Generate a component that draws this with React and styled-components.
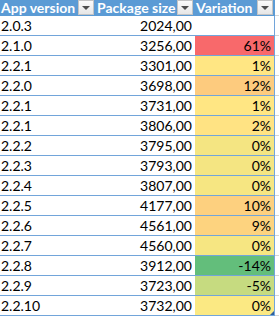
import React from 'react';
import styled, { createGlobalStyle } from 'styled-components';

const GlobalStyle = createGlobalStyle`
  html, body {
    margin: 0;
    padding: 0;
    background: #ffffff;
  }
  body {
    font-family: 'Lato', 'Liberation Sans', sans-serif;
    color: #000000;
  }
`;

const rows = [
  { version: '2.0.3', size: '2024,00', variation: null, fill: null },
  { version: '2.1.0', size: '3256,00', variation: '61%', fill: '#F8696B' },
  { version: '2.2.1', size: '3301,00', variation: '1%', fill: '#FFE683' },
  { version: '2.2.0', size: '3698,00', variation: '12%', fill: '#FDCB7E' },
  { version: '2.2.1', size: '3731,00', variation: '1%', fill: '#FFE683' },
  { version: '2.2.1', size: '3806,00', variation: '2%', fill: '#FFE383' },
  { version: '2.2.2', size: '3795,00', variation: '0%', fill: '#F4E582' },
  { version: '2.2.3', size: '3793,00', variation: '0%', fill: '#F4E582' },
  { version: '2.2.4', size: '3807,00', variation: '0%', fill: '#F6E682' },
  { version: '2.2.5', size: '4177,00', variation: '10%', fill: '#FDD07F' },
  { version: '2.2.6', size: '4561,00', variation: '9%', fill: '#FDD37F' },
  { version: '2.2.7', size: '4560,00', variation: '0%', fill: '#F6E682' },
  { version: '2.2.8', size: '3912,00', variation: '-14%', fill: '#63BE7B' },
  { version: '2.2.9', size: '3723,00', variation: '-5%', fill: '#C6DB80' },
  { version: '2.2.10', size: '3732,00', variation: '0%', fill: '#FBE983' },
];

const columns = ['App version', 'Package size', 'Variation'];

const Sheet = styled.div`
  width: 279px;
  height: 318px;
  overflow: hidden;
  font-size: 14px;
`;

const Row = styled.div`
  display: grid;
  grid-template-columns: 96px 99px 80px 1fr;
  height: ${p => (p.$header ? '16px' : '20px')};
`;

const HeadCell = styled.div`
  display: flex;
  justify-content: space-between;
  align-items: flex-start;
  background: #5B9BD5;
  color: #ffffff;
  font-weight: bold;
  padding-left: ${p => (p.$first ? '1px' : '1px')};
  overflow: hidden;
`;

const HeadLabel = styled.span`
  line-height: 16px;
  white-space: nowrap;
`;

const FilterButton = styled.span`
  flex: none;
  width: 16px;
  height: 15px;
  box-sizing: border-box;
  margin-right: 2px;
  border: 1px solid #c4c4c4;
  background: linear-gradient(#fbfbfb, #e6e6e6);
  display: flex;
  align-items: center;
  justify-content: center;

  &::after {
    content: '';
    border-left: 4px solid transparent;
    border-right: 4px solid transparent;
    border-top: 4px solid #4d4d4d;
    margin-top: 1px;
  }
`;

const Cell = styled.div`
  position: relative;
  display: flex;
  align-items: center;
  justify-content: ${p => (p.$align === 'right' ? 'flex-end' : 'flex-start')};
  padding: ${p => (p.$align === 'right' ? '0 3px 0 0' : '0 0 0 1px')};
  background: ${p => p.$fill || '#ffffff'};
  border-bottom: 1px solid #72A5DA;
  border-right: ${p => (p.$last ? '1px solid #72A5DA' : '0')};
  white-space: nowrap;
  line-height: 19px;
`;

const Gridline = styled.div`
  border-bottom: 1px solid #d6d6d6;
  background: #ffffff;
`;

const ResizeHandle = styled.span`
  position: absolute;
  right: 0;
  bottom: 0;
  width: 0;
  height: 0;
  border-left: 4px solid transparent;
  border-bottom: 4px solid #2f5f9e;
`;

export default function App() {
  return (
    <>
      <GlobalStyle />
      <Sheet>
        <Row $header>
          {columns.map((name, i) => (
            <HeadCell key={name} $first={i === 0}>
              <HeadLabel>{name}</HeadLabel>
              <FilterButton />
            </HeadCell>
          ))}
          <Gridline />
        </Row>
        {rows.map((row, i) => (
          <Row key={i}>
            <Cell>{row.version}</Cell>
            <Cell $align="right">{row.size}</Cell>
            <Cell $align="right" $fill={row.fill} $last>
              {row.variation}
              {i === rows.length - 1 && <ResizeHandle />}
            </Cell>
            <Gridline />
          </Row>
        ))}
      </Sheet>
    </>
  );
}
